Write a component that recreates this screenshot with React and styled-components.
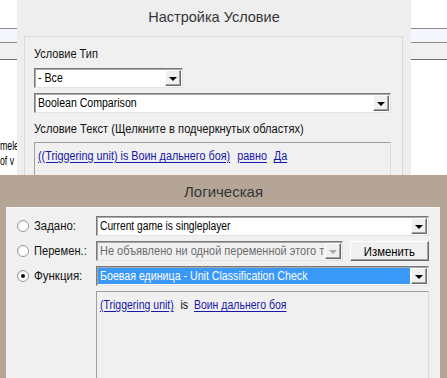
import React from "react";
import styled, { createGlobalStyle, css } from "styled-components";

const Global = createGlobalStyle`
  html, body { margin: 0; padding: 0; background: #ffffff; overflow: hidden; }
  body { font-family: "Liberation Sans", Arial, sans-serif; }
`;

const UI_FONT = `"Liberation Sans", Arial, sans-serif`;

const Desktop = styled.div`
  position: relative;
  width: 447px;
  height: 378px;
  overflow: hidden;
  background: #ffffff;
  font-family: ${UI_FONT};
  font-size: 12.5px;
  color: #000;
`;

/* narrow system font look: the dialogs use a condensed face */
const Condensed = styled.span`
  display: inline-block;
  white-space: nowrap;
  transform: scaleX(${(p) => p.$sx || 0.84});
  transform-origin: ${(p) => (p.$center ? "50% 50%" : "0 50%")};
`;

const ToolBand = styled.div`
  margin-top: 28px;
  border-top: 1px solid #8a8a8a;
  border-bottom: 1px solid #6e6e6e;
`;

const BandStrip = styled.div`
  height: ${(p) => p.$h}px;
  background: ${(p) => p.$bg};
  border-bottom: ${(p) => (p.$line ? "1px solid #8a8a8a" : "none")};
`;

const PageText = styled.div`
  padding-top: 79px;
  line-height: 15px;
  white-space: nowrap;
`;

const Window = styled.div`
  position: absolute;
  left: ${(p) => p.$x}px;
  top: ${(p) => p.$y}px;
  width: ${(p) => p.$w}px;
  height: ${(p) => p.$h}px;
  background: ${(p) => p.$bg};
  box-sizing: border-box;
  display: flex;
  flex-direction: column;
`;

const TitleBar = styled.div`
  height: ${(p) => p.$h}px;
  flex: none;
  display: flex;
  align-items: center;
  justify-content: center;
  font-size: ${(p) => p.$fs || 15}px;
  color: #363636;
  padding-bottom: ${(p) => p.$pb || 0}px;
  box-sizing: border-box;
`;

const TopPanel = styled.div`
  margin-left: 7px;
  width: 379px;
  flex: 1;
  box-sizing: border-box;
  border: 1px solid #d8d8d8;
  background: #f0f0f0;
  padding: 10px 0 0 9px;
  display: flex;
  flex-direction: column;
`;

const FieldLabel = styled.div`
  height: 14px;
  line-height: 14px;
  margin-top: ${(p) => p.$mt || 0}px;
  white-space: nowrap;
  color: #111;
`;

const SelectBox = styled.div`
  width: ${(p) => p.$w}px;
  height: 20px;
  margin-top: ${(p) => p.$mt || 0}px;
  box-sizing: border-box;
  border-style: solid;
  border-width: 1px;
  border-color: #7a7a7a #e3e3e3 #e3e3e3 #7a7a7a;
  box-shadow: inset 1px 1px 0 #a8a8a8;
  background: ${(p) => (p.$disabled ? "#f0f0f0" : "#ffffff")};
  display: flex;
  align-items: stretch;
  padding: 1px;
  flex: none;
`;

const SelectValue = styled.div`
  flex: 1;
  min-width: 0;
  display: flex;
  align-items: center;
  padding-left: 2px;
  white-space: nowrap;
  overflow: hidden;
  color: ${(p) => (p.$disabled ? "#6d6d6d" : "#000")};
  ${(p) =>
    p.$selected &&
    css`
      background: #3a98f6;
      color: #ffffff;
    `}
`;

const ArrowButton = styled.div`
  width: 16px;
  flex: none;
  box-sizing: border-box;
  border-style: solid;
  border-width: 1px;
  border-color: #ffffff #6a6a6a #6a6a6a #ffffff;
  box-shadow: inset -1px -1px 0 #a0a0a0;
  background: #f0f0f0;
  display: flex;
  align-items: center;
  justify-content: center;
  margin-left: 1px;
`;

const Triangle = styled.span`
  width: 0;
  height: 0;
  border-left: 4px solid transparent;
  border-right: 4px solid transparent;
  border-top: 4px solid ${(p) => (p.$disabled ? "#a8a8a8" : "#000")};
  margin-top: 1px;
`;

const TextBox = styled.div`
  width: ${(p) => p.$w}px;
  margin-top: ${(p) => p.$mt || 0}px;
  flex: 1;
  box-sizing: border-box;
  border-style: solid;
  border-width: 1px;
  border-color: #a0a0a0 #dcdcdc #dcdcdc #a0a0a0;
  background: #f0f0f0;
  padding: 6px 3px;
  white-space: nowrap;
  line-height: 14px;
  overflow: hidden;
`;

const Link = styled.span`
  color: #1717a8;
  text-decoration: underline;
  text-underline-offset: 2px;
  margin-right: ${(p) => p.$mr || 0}px;
`;

const Plain = styled.span`
  margin-right: 7px;
`;

const BottomPanel = styled.div`
  margin-left: 6px;
  width: 434px;
  flex: 1;
  box-sizing: border-box;
  background: #f0f0f0;
  border-top: 1px solid #f8f8f8;
  border-left: 1px solid #f8f8f8;
  padding-top: 8px;
  display: grid;
  grid-template-columns: 89px 333px;
  grid-template-rows: 20px 20px 20px 1fr;
  row-gap: 5px;
`;

const RadioRow = styled.div`
  display: flex;
  align-items: center;
  padding-left: 10px;
  gap: 5px;
  white-space: nowrap;
  color: #111;
`;

const Radio = styled.span`
  width: 12px;
  height: 12px;
  box-sizing: border-box;
  border-radius: 50%;
  border: 1px solid #9a9a9a;
  background: radial-gradient(circle at 60% 60%, #ffffff 45%, #dedede 100%);
  display: flex;
  align-items: center;
  justify-content: center;
  flex: none;
  &::after {
    content: "";
    width: 4px;
    height: 4px;
    border-radius: 50%;
    background: ${(p) => (p.$checked ? "#111" : "transparent")};
  }
`;

const InlineRow = styled.div`
  display: flex;
  gap: 7px;
`;

const PushButton = styled.div`
  width: 79px;
  height: 20px;
  box-sizing: border-box;
  border-style: solid;
  border-width: 1px;
  border-color: #ffffff #6a6a6a #6a6a6a #ffffff;
  box-shadow: inset -1px -1px 0 #a0a0a0;
  background: #f0f0f0;
  display: flex;
  align-items: center;
  justify-content: center;
  font-size: 13px;
`;

const Spacer = styled.div``;

function Select({ w, mt, value, disabled, selected, sx }) {
  return (
    <SelectBox $w={w} $mt={mt} $disabled={disabled}>
      <SelectValue $disabled={disabled} $selected={selected}>
        <Condensed $sx={sx}>{value}</Condensed>
      </SelectValue>
      <ArrowButton>
        <Triangle $disabled={disabled} />
      </ArrowButton>
    </SelectBox>
  );
}

export default function App() {
  return (
    <Desktop>
      <Global />
      <ToolBand>
        <BandStrip $h={13} $bg="#f4f7fb" $line />
        <BandStrip $h={16} $bg="#f0f0f0" />
      </ToolBand>
      <PageText>
        <Condensed $sx={0.7}>mele</Condensed>
        <br />
        <Condensed $sx={0.7}>of v</Condensed>
      </PageText>

      <Window $x={17} $y={0} $w={394} $h={200} $bg="#eeeeee">
        <TitleBar $h={36} $pb={2} $fs={14.5}>Настройка Условие</TitleBar>
        <TopPanel>
          <FieldLabel>
            <Condensed $sx={0.88}>Условие Тип</Condensed>
          </FieldLabel>
          <Select w={149} mt={7} sx={0.85} value="- Все" />
          <Select w={357} mt={5} sx={0.845} value="Boolean Comparison" />
          <FieldLabel $mt={9}>
            <Condensed $sx={0.89}>Условие Текст (Щелкните в подчеркнутых областях)</Condensed>
          </FieldLabel>
          <TextBox $w={357} $mt={6}>
            <Condensed $sx={0.865}>
              <Link $mr={8}>((Triggering unit) is Воин дальнего боя)</Link>
              <Link $mr={8}>равно</Link>
              <Link>Да</Link>
            </Condensed>
          </TextBox>
        </TopPanel>
      </Window>

      <Window $x={0} $y={175} $w={447} $h={220} $bg="#b4a597">
        <TitleBar $h={32}>Логическая</TitleBar>
        <BottomPanel>
          <RadioRow>
            <Radio />
            <Condensed $sx={0.91}>Задано:</Condensed>
          </RadioRow>
          <Select w={333} sx={0.82} value="Current game is singleplayer" />
          <RadioRow>
            <Radio />
            <Condensed $sx={0.89}>Перемен.:</Condensed>
          </RadioRow>
          <InlineRow>
            <Select w={247} sx={0.88} disabled value="Не объявлено ни одной переменной этого т" />
            <PushButton>
              <Condensed $center $sx={0.87}>Изменить</Condensed>
            </PushButton>
          </InlineRow>
          <RadioRow>
            <Radio $checked />
            <Condensed $sx={0.92}>Функция:</Condensed>
          </RadioRow>
          <Select w={333} selected sx={0.85} value="Боевая единица - Unit Classification Check" />
          <Spacer />
          <TextBox $w={333}>
            <Condensed $sx={0.84}>
              <Link $mr={8}>(Triggering unit)</Link>
              <Plain>is</Plain>
              <Link>Воин дальнего боя</Link>
            </Condensed>
          </TextBox>
        </BottomPanel>
      </Window>
    </Desktop>
  );
}
